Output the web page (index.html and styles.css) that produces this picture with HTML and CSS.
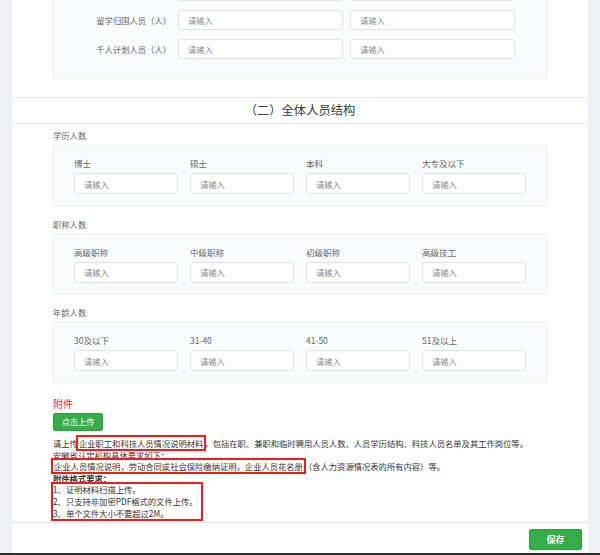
FILE: index.html
```html
<!DOCTYPE html>
<html lang="zh-CN">
<head>
<meta charset="utf-8">
<title>全体人员结构</title>
<link rel="stylesheet" href="styles.css">
</head>
<body>
<div class="page">
  <div class="panel">
    <section class="sec-top">
      <div class="kv-box">
        <div class="kv-row">
          <label class="kv-label"></label>
          <input class="inp" placeholder="请输入">
          <input class="inp" placeholder="请输入">
        </div>
        <div class="kv-row">
          <label class="kv-label">留学归国人员（人）</label>
          <input class="inp" placeholder="请输入">
          <input class="inp" placeholder="请输入">
        </div>
        <div class="kv-row">
          <label class="kv-label">千人计划人员（人）</label>
          <input class="inp" placeholder="请输入">
          <input class="inp" placeholder="请输入">
        </div>
      </div>
    </section>

    <h2 class="title">（二）全体人员结构</h2>

    <section class="sec-groups">
      <div class="group">
        <div class="group-label">学历人数</div>
        <div class="group-box">
          <div class="field"><div class="field-label">博士</div><input class="inp inp-g" placeholder="请输入"></div>
          <div class="field"><div class="field-label">硕士</div><input class="inp inp-g" placeholder="请输入"></div>
          <div class="field"><div class="field-label">本科</div><input class="inp inp-g" placeholder="请输入"></div>
          <div class="field"><div class="field-label">大专及以下</div><input class="inp inp-g" placeholder="请输入"></div>
        </div>
      </div>
      <div class="group">
        <div class="group-label">职称人数</div>
        <div class="group-box">
          <div class="field"><div class="field-label">高级职称</div><input class="inp inp-g" placeholder="请输入"></div>
          <div class="field"><div class="field-label">中级职称</div><input class="inp inp-g" placeholder="请输入"></div>
          <div class="field"><div class="field-label">初级职称</div><input class="inp inp-g" placeholder="请输入"></div>
          <div class="field"><div class="field-label">高级技工</div><input class="inp inp-g" placeholder="请输入"></div>
        </div>
      </div>
      <div class="group">
        <div class="group-label">年龄人数</div>
        <div class="group-box">
          <div class="field"><div class="field-label">30及以下</div><input class="inp inp-g" placeholder="请输入"></div>
          <div class="field"><div class="field-label">31-40</div><input class="inp inp-g" placeholder="请输入"></div>
          <div class="field"><div class="field-label">41-50</div><input class="inp inp-g" placeholder="请输入"></div>
          <div class="field"><div class="field-label">51及以上</div><input class="inp inp-g" placeholder="请输入"></div>
        </div>
      </div>
    </section>

    <section class="attach">
      <div class="attach-title">附件</div>
      <button class="btn btn-upload" type="button">点击上传</button>
      <div class="note">
        <p>请上传<span class="mark">企业职工和科技人员情况说明材料</span>，包括在职、兼职和临时聘用人员人数、人员学历结构、科技人员名单及其工作岗位等。</p>
        <p>安徽省认定机构具体要求如下：</p>
        <p><span class="mark">企业人员情况说明，劳动合同或社会保险缴纳证明，企业人员花名册</span>（含人力资源情况表的所有内容）等。</p>
        <p class="strong">附件格式要求：</p>
        <div class="mark-block">
          <p>1、证明材料扫描上传。</p>
          <p>2、只支持非加密PDF格式的文件上传。</p>
          <p>3、单个文件大小不要超过2M。</p>
        </div>
      </div>
    </section>

    <footer class="footer">
      <button class="btn btn-save" type="button">保存</button>
    </footer>
  </div>
</div>
<div class="bottom-bar"></div>
</body>
</html>
```

FILE: styles.css
```css
* { box-sizing: border-box; }

html, body {
  margin: 0;
  padding: 0;
}

body {
  height: 555px;
  overflow: hidden;
  background: #edf0f5;
  font-family: "Noto Sans CJK SC", "Noto Sans", sans-serif;
  color: #333;
  display: flex;
  flex-direction: column;
}

.page {
  flex: 1;
  min-height: 0;
  padding: 0 12px;
  overflow: hidden;
  display: flex;
  flex-direction: column;
}

.panel {
  background: #fff;
  flex: 1;
  min-height: 0;
  display: flex;
  flex-direction: column;
}

/* top partial section */
.sec-top {
  padding: 0 41px 18px;
}

.kv-box {
  margin-top: -39px;
  background: #fafbfd;
  border: 1px solid #e8ebf0;
  border-radius: 3px;
  padding: 19px 0 19px;
  display: flex;
  flex-direction: column;
  gap: 9px;
}

.kv-row {
  display: flex;
  align-items: center;
}

.kv-label {
  width: 117px;
  text-align: right;
  font-size: 8.3px;
  color: #666;
  margin-right: 7px;
}

.inp {
  display: block;
  height: 20px;
  width: 165px;
  border: 1px solid #dde1e8;
  border-radius: 3px;
  background: #fff;
  padding: 0 9px;
  font-family: "Noto Sans CJK SC", "Noto Sans", sans-serif;
  font-size: 8.3px;
  color: #333;
  outline: none;
}

.inp::placeholder {
  color: #8c8c8c;
}

.kv-row .inp + .inp {
  margin-left: 7px;
}

/* title */
.title {
  margin: 0;
  height: 27px;
  line-height: 25px;
  border-top: 1px solid #e6e9ee;
  border-bottom: 1px solid #e6e9ee;
  text-align: center;
  font-size: 12.3px;
  font-weight: normal;
  color: #3a3a3a;
}

/* groups */
.sec-groups {
  padding: 4px 41px 0;
}

.group {
  margin-bottom: 11px;
}

.group-label {
  font-size: 8.3px;
  line-height: 14px;
  color: #666;
  margin-bottom: 3px;
}

.group-box {
  background: #fafbfd;
  border: 1px solid #e8ebf0;
  border-radius: 3px;
  padding: 10px 20px 10.5px;
  display: grid;
  grid-template-columns: repeat(4, 1fr);
  column-gap: 12px;
}

.field-label {
  font-size: 8.5px;
  line-height: 14px;
  color: #666;
  margin-bottom: 3px;
}

.inp-g {
  width: 100%;
  height: 21px;
}

/* attachments */
.attach {
  padding: 3.5px 41px 3px;
}

.attach-title {
  font-size: 10px;
  line-height: 14px;
  color: #f0142c;
}

.btn {
  border: 1px solid #2e9c3f;
  background: #37ad47;
  color: #fff;
  font-family: "Noto Sans CJK SC", "Noto Sans", sans-serif;
  border-radius: 2px;
  padding: 0;
  cursor: pointer;
}

.btn-upload {
  display: block;
  margin-top: 2.3px;
  width: 50px;
  height: 17.4px;
  font-size: 8.3px;
  line-height: 15px;
}

.note {
  margin-top: 7.3px;
  font-size: 8.3px;
  line-height: 11.6px;
  color: #333;
}

.note p {
  margin: 0;
  white-space: nowrap;
}

.note .strong {
  font-weight: bold;
}

.mark {
  outline: 2px solid #f01c1c;
  padding: 0 1px;
}

.mark-block {
  display: inline-block;
  outline: 2px solid #f01c1c;
  padding-right: 3px;
}

/* footer */
.footer {
  border-top: 1px solid #e4e7ed;
  padding: 6px 6px 0;
  display: flex;
  justify-content: flex-end;
  flex: 1;
  align-items: flex-start;
}

.btn-save {
  width: 53px;
  height: 21px;
  font-size: 9px;
  font-weight: bold;
  background: #36ae47;
  border-color: #2f9e40;
}

.bottom-bar {
  height: 2px;
  flex: none;
  background: #2a2a2a;
}
```
